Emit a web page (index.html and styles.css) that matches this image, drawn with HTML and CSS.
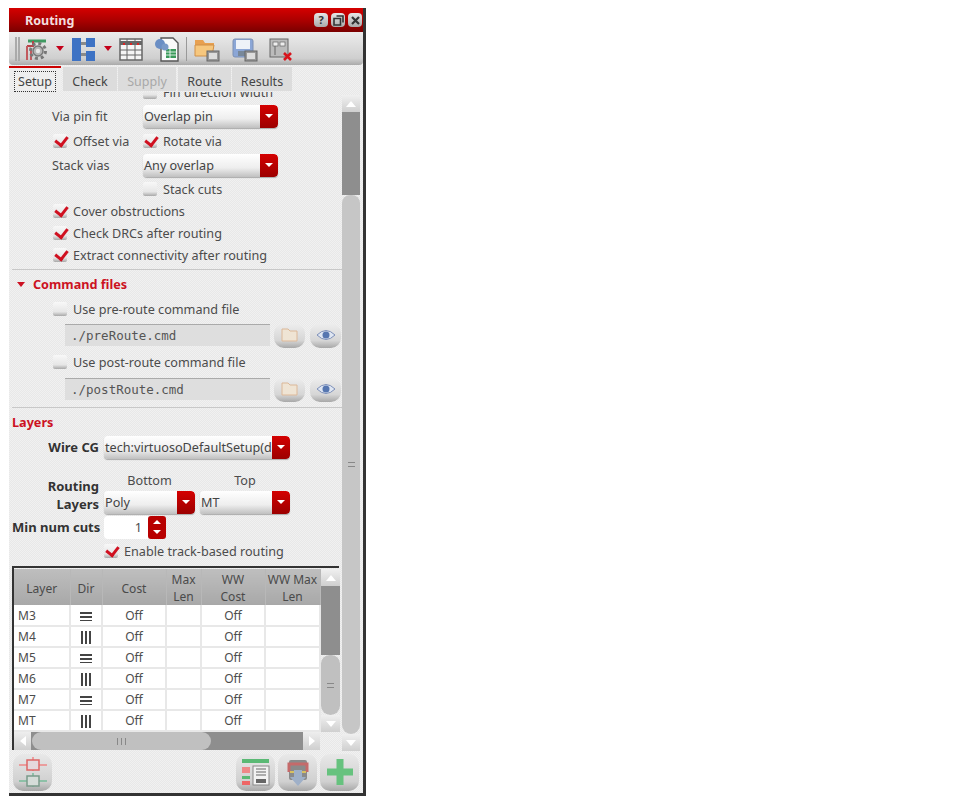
FILE: index.html
```html
<!DOCTYPE html>
<html lang="en">
<head>
  <meta charset="UTF-8" />
  <title>Routing</title>
  <link rel="stylesheet" href="styles.css">
</head>
<body>
<div class="window">
  <div class="titlebar">
    <span class="title">Routing</span>
    <div class="title-btns">
      <span class="tbtn">?</span>
      <span class="tbtn"><svg width="11" height="11" viewBox="0 0 11 11"><path d="M3.5 1h6.500v6.500M1 3.500h6.500v6.500h-6.500z" fill="none" stroke="#333" stroke-width="1.600"/></svg></span>
      <span class="tbtn"><svg width="11" height="11" viewBox="0 0 11 11"><path d="M2 2l7 7M9 2l-7 7" stroke="#333" stroke-width="2.200"/></svg></span>
    </div>
  </div>

  <div class="toolbar">
    <span class="grip"></span>
    <svg class="ti" width="24" height="24" viewBox="0 0 24 24"><path d="M5 4h18" stroke="#3f9a62" stroke-width="3"/><path d="M4 9h6V4" stroke="#b8434a" stroke-width="2" fill="none"/><path d="M4 9v14M8 12v11" stroke="#c25a5f" stroke-width="2"/><circle cx="15" cy="14" r="7.500" fill="none" stroke="#777" stroke-width="3" stroke-dasharray="3 2.900"/><circle cx="15" cy="14" r="5" fill="#b5b5b5" stroke="#777" stroke-width="1.500"/><circle cx="15" cy="14" r="2.200" fill="#e8e8e8"/></svg>
    <span class="caret"></span>
    <svg class="ti" width="24" height="24" viewBox="0 0 24 24"><rect x="1" y="1" width="9" height="23" fill="#3d72c4"/><rect x="15" y="1" width="9" height="9" fill="#3d72c4"/><rect x="15" y="14" width="9" height="10" fill="#3d72c4"/><rect x="10" y="5" width="5" height="3" fill="#8a8a8a"/><rect x="10" y="16" width="5" height="3" fill="#8a8a8a"/></svg>
    <span class="caret"></span>
    <svg class="ti" width="24" height="24" viewBox="0 0 24 24"><rect x="1" y="2" width="22" height="21" fill="#f5f5f5" stroke="#666" stroke-width="1.500"/><path d="M1 6h22" stroke="#666" stroke-width="4"/><path d="M1 13h22M1 18h22M8 2v21M16 2v21" stroke="#666"/><path d="M4 7h2M11 7h2M18 7h2" stroke="#d22" stroke-width="2"/></svg>
    <svg class="ti sheet" width="26" height="26" viewBox="0 0 26 26"><path d="M7 2h12l5 5v18H7z" fill="#fafafa" stroke="#555" stroke-width="1.400"/><rect x="12" y="13" width="10" height="9" fill="#3a9a5a"/><path d="M12 16h10M12 19h10M16 13v9" stroke="#fff" stroke-width=".8"/><circle cx="6" cy="8" r="5" fill="#6a8ec4"/><circle cx="11" cy="11" r="3.500" fill="#7a9ac8"/></svg>
    <span class="sep"></span>
    <svg class="ti" width="26" height="26" viewBox="0 0 26 26"><path d="M1 4h8l2 3h9v6H1z" fill="#e8a050"/><path d="M1 9h19l-2 11H1z" fill="#f6c77e" stroke="#d09048"/><rect x="13" y="15" width="12" height="10" fill="#999" stroke="#666"/><rect x="15" y="17" width="8" height="6" fill="#ddd"/></svg>
    <svg class="ti save" width="26" height="26" viewBox="0 0 26 26"><rect x="1" y="3" width="20" height="18" rx="2" fill="#8ba6d6" stroke="#7c90b4"/><rect x="4" y="4" width="14" height="9" fill="#eef2f8"/><rect x="6" y="15" width="9" height="5" fill="#78889a"/><rect x="13" y="15" width="12" height="10" fill="#999" stroke="#666"/><rect x="15" y="17" width="8" height="6" fill="#ddd"/></svg>
    <svg class="ti" width="24" height="26" viewBox="0 0 24 26"><rect x="1" y="3" width="18" height="18" fill="#bbb" stroke="#666"/><rect x="4" y="6" width="5" height="4" fill="#eee" stroke="#666" stroke-width=".7"/><rect x="11" y="6" width="5" height="4" fill="#eee" stroke="#666" stroke-width=".7"/><path d="M6 10v9" stroke="#666"/><path d="M15 17l7 7M22 17l-7 7" stroke="#d8141c" stroke-width="2.600"/></svg>
  </div>

  <div class="tabs">
    <span class="tab active"><span class="focus">Setup</span></span>
    <span class="tab check-tab">Check</span>
    <span class="tab supply-tab disabled">Supply</span>
    <span class="tab route-tab">Route</span>
    <span class="tab results-tab">Results</span>
  </div>

  <div class="main">
    <div class="scroller">
      <section class="via-section">
        <div class="row r-clip"><span class="spacer"></span><label class="check"><i class="box"></i>Fin direction width</label></div>
        <div class="row r-26"><span class="lbl">Via pin fit</span><span class="select s-via">Overlap pin<b class="drop"></b></span></div>
        <div class="row r-23"><label class="check c-first"><i class="box on"></i>Offset via</label><label class="check"><i class="box on"></i>Rotate via</label></div>
        <div class="row r-26"><span class="lbl">Stack vias</span><span class="select s-via">Any overlap<b class="drop"></b></span></div>
        <div class="row r-22"><span class="spacer"></span><label class="check"><i class="box"></i>Stack cuts</label></div>
        <div class="row r-22 ind"><label class="check"><i class="box on"></i>Cover obstructions</label></div>
        <div class="row r-22 ind"><label class="check"><i class="box on"></i>Check DRCs after routing</label></div>
        <div class="row r-22 ind"><label class="check"><i class="box on"></i>Extract connectivity after routing</label></div>
      </section>

      <section class="cmd-section">
        <h3 class="sec-head"><i class="tri"></i>Command files</h3>
        <div class="row r-22 ind"><label class="check"><i class="box"></i>Use pre-route command file</label></div>
        <div class="file-row">
          <span class="file">./preRoute.cmd</span>
          <span class="round"><svg width="20" height="16" viewBox="0 0 20 16"><path d="M2 2h6l2 2h7v10H2z" fill="#efe4d4" stroke="#dcb898"/></svg></span>
          <span class="round"><svg width="20" height="14" viewBox="0 0 20 14"><path d="M1 7q9-9 18 0q-9 9-18 0z" fill="#dfe6f2" stroke="#7d8fb8"/><circle cx="10" cy="7" r="3.500" fill="#5676b0"/></svg></span>
        </div>
        <div class="row r-22 ind post"><label class="check"><i class="box"></i>Use post-route command file</label></div>
        <div class="file-row">
          <span class="file">./postRoute.cmd</span>
          <span class="round"><svg width="20" height="16" viewBox="0 0 20 16"><path d="M2 2h6l2 2h7v10H2z" fill="#efe4d4" stroke="#dcb898"/></svg></span>
          <span class="round"><svg width="20" height="14" viewBox="0 0 20 14"><path d="M1 7q9-9 18 0q-9 9-18 0z" fill="#dfe6f2" stroke="#7d8fb8"/><circle cx="10" cy="7" r="3.500" fill="#5676b0"/></svg></span>
        </div>
      </section>

      <section class="layers-section">
        <h3 class="sec-head plain">Layers</h3>
        <div class="layer-form">
          <span class="blbl wire-lbl">Wire CG</span>
          <span class="select s-wire">tech:virtuosoDefaultSetup(default)<b class="drop"></b></span>
          <span class="col-head">Bottom</span>
          <span class="col-head">Top</span>
          <span class="blbl routing-lbl">Routing<br>Layers</span>
          <span class="select">Poly<b class="drop"></b></span>
          <span class="select">MT<b class="drop"></b></span>
          <span class="blbl">Min num cuts</span>
          <span class="spin"><span class="spin-val">1</span><span class="spin-btns"><i class="up"></i><i class="down"></i></span></span>
          <label class="check enable"><i class="box on"></i>Enable track-based routing</label>
        </div>
      </section>

      <div class="grid-wrap">
        <div class="grid-top">
          <table class="grid">
            <colgroup><col class="c1"><col class="c2"><col class="c3"><col class="c4"><col class="c5"><col class="c6"></colgroup>
            <thead>
              <tr><th>Layer</th><th>Dir</th><th>Cost</th><th>Max<br>Len</th><th>WW<br>Cost</th><th>WW Max<br>Len</th></tr>
            </thead>
            <tbody>
              <tr><td>M3</td><td class="mid"><i class="dir-h"></i></td><td class="mid">Off</td><td></td><td class="mid">Off</td><td></td></tr>
              <tr><td>M4</td><td class="mid"><i class="dir-v"></i></td><td class="mid">Off</td><td></td><td class="mid">Off</td><td></td></tr>
              <tr><td>M5</td><td class="mid"><i class="dir-h"></i></td><td class="mid">Off</td><td></td><td class="mid">Off</td><td></td></tr>
              <tr><td>M6</td><td class="mid"><i class="dir-v"></i></td><td class="mid">Off</td><td></td><td class="mid">Off</td><td></td></tr>
              <tr><td>M7</td><td class="mid"><i class="dir-h"></i></td><td class="mid">Off</td><td></td><td class="mid">Off</td><td></td></tr>
              <tr><td>MT</td><td class="mid"><i class="dir-v"></i></td><td class="mid">Off</td><td></td><td class="mid">Off</td><td></td></tr>
            </tbody>
          </table>
          <div class="vbar inner">
            <span class="arrow"><i class="a-up"></i></span>
            <span class="track t-inner"></span>
            <span class="thumb th-inner"><i class="handle"></i></span>
            <span class="arrow"><i class="a-down"></i></span>
          </div>
        </div>
        <div class="hbar">
          <span class="arrow-h"><i class="a-left"></i></span>
          <span class="hthumb"><i class="vhandle"></i></span>
          <span class="htrack"></span>
          <span class="arrow-h"><i class="a-right"></i></span>
        </div>
      </div>
    </div>

    <div class="vbar outer">
      <span class="arrow"><i class="a-up"></i></span>
      <span class="track t-outer"></span>
      <span class="thumb th-outer"><i class="handle"></i></span>
      <span class="arrow"><i class="a-down"></i></span>
    </div>
  </div>

  <div class="footer">
    <span class="fbtn"><svg width="30" height="32" viewBox="0 0 30 32"><path d="M1 9h28M15 1v14" stroke="#e88" stroke-width="1.500"/><rect x="9" y="4" width="12" height="10" fill="#e5d8dc" stroke="#d66" stroke-width="1.500"/><path d="M1 25h28M15 17v14" stroke="#7b9" stroke-width="1.500"/><rect x="9" y="20" width="12" height="10" fill="#d5dcd8" stroke="#7a9a8a" stroke-width="1.500"/></svg></span>
    <span class="fbtn push"><svg width="30" height="30" viewBox="0 0 30 30"><rect x="1" y="2" width="27" height="4" fill="#5ab974"/><rect x="1" y="10" width="8" height="6" fill="#e88"/><rect x="1" y="19" width="8" height="3" fill="#5ab974"/><rect x="1" y="24" width="8" height="4" fill="#e66"/><rect x="12" y="9" width="16" height="19" fill="#f2f2f2" stroke="#888"/><path d="M15 12h10M15 15h10M15 18h10" stroke="#666"/><rect x="15" y="22" width="10" height="4" fill="#666"/></svg></span>
    <span class="fbtn"><svg width="28" height="30" viewBox="0 0 28 30"><rect x="5" y="3" width="18" height="20" rx="2" fill="#8a8a8a"/><path d="M5 15V7h18v8" fill="none" stroke="#c56a6a" stroke-width="3"/><path d="M6 15h5M22 15h-5" stroke="#d8c060" stroke-width="2"/><path d="M10 13h8v7h4l-8 9l-8-9h4z" fill="#9fb0c8"/></svg></span>
    <span class="fbtn"><svg width="30" height="30" viewBox="0 0 30 30"><path d="M15 2v26M2 15h26" stroke="#66c27e" stroke-width="7"/></svg></span>
  </div>
</div>
</body>
</html>
```

FILE: styles.css
```css
* {
  box-sizing: border-box;
}
html, body {
  height: 100%;
}
body {
  margin: 0;
  background-color: #fff;
  font-family: "Noto Sans", "Open Sans", sans-serif;
  font-size: 12.65px;
  color: #4c4c4c;
  overflow: hidden;
}
.window {
  width: 357px;
  height: 788px;
  margin: 8px 0 0 9px;
  /* the capture is dithered, this gives the same speckled grey */
  background: repeating-conic-gradient(#f1f1f1 0 25%, #e8e8e8 0 50%) 0 0 / 2px 2px;
  border-right: 3px solid #333;
  border-bottom: 3px solid #333;
  display: flex;
  flex-direction: column;
}

/* title bar */
.titlebar {
  height: 24px;
  flex: none;
  background: linear-gradient(#d50000, #a80000 55%, #7a0000);
  display: flex;
  align-items: center;
  justify-content: space-between;
  padding: 0 1px 0 16px;
}
.title {
  color: #f3dede;
  font-weight: 700;
  font-size: 12.5px;
}
.title-btns {
  display: flex;
  gap: 3px;
}
.tbtn {
  width: 14px;
  height: 14px;
  border-radius: 4px;
  background: linear-gradient(#e6e6e6, #aaa);
  color: #333;
  font-weight: 700;
  font-size: 11px;
  line-height: 14px;
  display: flex;
  align-items: center;
  justify-content: center;
}

/* toolbar */
.toolbar {
  height: 33px;
  flex: none;
  background: linear-gradient(#ececec, #cfcfcf 80%, #aaa);
  border-radius: 0 0 4px 4px;
  display: flex;
  align-items: center;
  padding-left: 6px;
}
.grip {
  width: 5px;
  height: 24px;
  border-left: 2px solid #aaa;
  border-right: 2px solid #aaa;
  margin-right: 3px;
}
.ti {
  flex: none;
}
.ti.sheet {
  margin-left: 11px;
}
.ti.save {
  margin: 0 11px 0 12px;
}
.caret {
  width: 0;
  height: 0;
  margin: 0 7px 0 9px;
  border-left: 4px solid transparent;
  border-right: 4px solid transparent;
  border-top: 5px solid #c4001a;
}
.sep {
  width: 1px;
  height: 24px;
  background-color: #999;
  margin: 0 7px 0 6px;
}

/* tabs */
.tabs {
  height: 26px;
  flex: none;
  display: flex;
  gap: 1px;
  margin-top: 1px;
}
.tab {
  background-color: #dcdcdc;
  border-top: 1px solid #eee;
  height: 25px;
  display: flex;
  align-items: center;
  justify-content: center;
  width: 54px;
  font-size: 12.5px;
  color: #444;
  padding-top: 5px;
}
.tab.active {
  width: 52px;
  background-color: #eee;
  border-top: 2px solid #cc0000;
  margin-right: 1px;
  padding-top: 3px;
}
.focus {
  border: 1px dotted #333;
  padding: 0 3px;
  line-height: 19px;
}
.supply-tab {
  width: 58px;
}
.route-tab {
  width: 53px;
  margin-left: 1px;
}
.results-tab {
  width: 60px;
}
.disabled {
  color: #a8a8a8;
}

/* main scroll area */
.main {
  flex: 1;
  display: flex;
  min-height: 0;
}
.scroller {
  width: 333px;
  overflow: hidden;
  padding-left: 3px;
  flex: none;
}
section {
  border-bottom: 1px solid #c8c8c8;
}
.via-section {
  padding-bottom: 3px;
}
.cmd-section {
  padding-bottom: 5px;
}
.layers-section {
  border-bottom: 0;
  padding-top: 4px;
}
.row {
  display: flex;
  align-items: center;
  padding-left: 40px;
}
.row.ind {
  padding-left: 41px;
}
.r-clip {
  height: 22px;
  margin-top: -11px;
}
.r-22 {
  height: 22px;
}
.r-23 {
  height: 23px;
}
.r-26 {
  height: 26px;
}
.spacer,
.lbl {
  width: 91px;
  flex: none;
}
.c-first {
  width: 90px;
  margin-left: 1px;
}
.check {
  display: flex;
  align-items: center;
  white-space: nowrap;
  gap: 6px;
}
.box {
  width: 14px;
  height: 14px;
  flex: none;
  border-radius: 2px;
  background: linear-gradient(#f8f8f8, #e6e6e6 70%, #a8a8a8);
  position: relative;
}
.box.on::after {
  content: "";
  position: absolute;
  left: 4px;
  top: 0;
  width: 6px;
  height: 9px;
  border-right: 3px solid #d01020;
  border-bottom: 3px solid #d01020;
  transform: rotate(38deg);
}
.select {
  height: 23px;
  border-radius: 4px;
  background: linear-gradient(#fff, #eee 60%, #c0c0c0);
  box-shadow: 0 1px 1px #aaa;
  display: flex;
  align-items: center;
  justify-content: space-between;
  padding-left: 1px;
  overflow: hidden;
  white-space: nowrap;
  color: #444;
  position: relative;
}
.s-via {
  width: 135px;
}
.drop {
  width: 18px;
  height: 23px;
  flex: none;
  background: linear-gradient(#d40000, #9c0000);
  border-radius: 0 4px 4px 0;
  position: absolute;
  right: 0;
  top: 0;
}
.drop::after {
  content: "";
  position: absolute;
  left: 5px;
  top: 9px;
  border-left: 4px solid transparent;
  border-right: 4px solid transparent;
  border-top: 4px solid #fff;
}
.sec-head {
  margin: 0;
  color: #cc1122;
  font-size: 12.65px;
  font-weight: 700;
  height: 28px;
  display: flex;
  align-items: center;
  padding-left: 5px;
}
.sec-head.plain {
  padding-left: 0;
  height: 20px;
}
.tri {
  width: 0;
  height: 0;
  margin-right: 8px;
  border-left: 4px solid transparent;
  border-right: 4px solid transparent;
  border-top: 5px solid #cc1122;
}
.file-row {
  display: flex;
  align-items: center;
  height: 26px;
  margin-top: 2px;
  padding-left: 53px;
}
.post {
  margin-top: 3px;
}
.post + .file-row {
  margin-top: 3px;
}
.file {
  width: 205px;
  height: 22px;
  flex: none;
  background-color: #dedede;
  border-top: 1px solid #aaa;
  font-family: "DejaVu Sans Mono", monospace;
  font-size: 12.5px;
  line-height: 21px;
  padding-left: 6px;
  margin-right: 4px;
  color: #555;
}
.round {
  width: 31px;
  height: 25px;
  flex: none;
  margin-right: 5px;
  border-radius: 10px;
  background: linear-gradient(#eee, #d6d6d6 70%, #a8a8a8);
  display: flex;
  align-items: center;
  justify-content: center;
}
.round:last-child {
  margin-right: 0;
}

/* layers form */
.layer-form {
  display: grid;
  grid-template-columns: 87px 91px 90px;
  column-gap: 5px;
  grid-template-rows: 24px 31px 24px 26px 22px;
  padding-top: 3px;
  align-items: center;
}
.blbl {
  font-weight: 700;
  font-size: 13px;
  color: #333;
  text-align: right;
  white-space: nowrap;
}
.wire-lbl {
  grid-column: 1;
}
.s-wire {
  grid-column: 2 / 4;
}
.col-head {
  text-align: center;
  align-self: end;
  padding-bottom: 1px;
}
.col-head:first-of-type {
  grid-column: 2;
}
.layer-form .col-head {
  grid-row: 2;
}
.layer-form .col-head + .col-head {
  grid-column: 3;
}
.routing-lbl {
  grid-column: 1;
  grid-row: 2 / 4;
  align-self: end;
  line-height: 18px;
  padding-bottom: 1px;
}
.spin {
  display: flex;
  width: 62px;
  height: 23px;
  grid-column: 2;
}
.spin-val {
  flex: 1;
  background-color: #fff;
  border-radius: 4px 0 0 4px;
  text-align: right;
  padding-right: 6px;
  line-height: 23px;
}
.spin-btns {
  width: 18px;
  background: #b80000;
  border-radius: 3px;
  display: flex;
  flex-direction: column;
  align-items: center;
  justify-content: space-around;
  padding: 2px 0;
}
.spin-btns .up {
  border-left: 4px solid transparent;
  border-right: 4px solid transparent;
  border-bottom: 4px solid #fff;
}
.spin-btns .down {
  border-left: 4px solid transparent;
  border-right: 4px solid transparent;
  border-top: 4px solid #fff;
}
.enable {
  grid-column: 2 / 4;
  white-space: nowrap;
}

/* table */
.grid-wrap {
  margin-top: 4px;
  width: 327px;
  border-top: 2px solid #333;
  border-left: 2px solid #333;
  padding-top: 1px;
}
.grid-top {
  display: flex;
}
.grid {
  width: 306px;
  flex: none;
  table-layout: fixed;
  border-collapse: collapse;
  background-color: #fff;
}
.c1 { width: 56px; }
.c2 { width: 32px; }
.c3 { width: 64px; }
.c4 { width: 35px; }
.c5 { width: 64px; }
.c6 { width: 55px; }
.grid th {
  height: 36px;
  font-weight: 400;
  font-size: 12px;
  line-height: 17px;
  color: #4a4a4a;
  background: linear-gradient(#bebebe, #a8a8a8);
  border-right: 1px solid #b8b8b8;
  padding: 2px 0 0;
  white-space: nowrap;
  overflow: hidden;
}
.grid td {
  height: 21px;
  padding: 0 0 0 4px;
  font-size: 12px;
  border-right: 2px solid #e8e8e8;
  border-bottom: 2px solid #e8e8e8;
}
.grid td.mid {
  text-align: center;
  padding: 0;
}
.dir-h,
.dir-v {
  display: inline-block;
  vertical-align: middle;
}
.dir-h {
  width: 12px;
  height: 9px;
  background: repeating-linear-gradient(#444 0 2px, #fff 2px 4px);
}
.dir-v {
  width: 10px;
  height: 13px;
  background: repeating-linear-gradient(90deg, #444 0 2px, #fff 2px 4px);
}
.vbar {
  display: flex;
  flex-direction: column;
  flex: none;
  width: 19px;
}
.arrow {
  height: 17px;
  flex: none;
  background: linear-gradient(#f0f0f0, #cfcfcf);
  display: flex;
  align-items: center;
  justify-content: center;
}
.a-up {
  border-left: 5px solid transparent;
  border-right: 5px solid transparent;
  border-bottom: 6px solid #fff;
}
.a-down {
  border-left: 5px solid transparent;
  border-right: 5px solid transparent;
  border-top: 6px solid #fff;
}
.track {
  background-color: #8e8e8e;
}
.t-inner {
  height: 69px;
}
.t-outer {
  height: 83px;
}
.thumb {
  background-color: #c6c6c6;
  border-radius: 9px 9px 10px 10px;
  display: flex;
  align-items: center;
  justify-content: center;
  flex: 1;
}
.th-inner {
  background-color: #c0c0c0;
}
.handle {
  width: 7px;
  height: 5px;
  border-top: 1px solid #888;
  border-bottom: 1px solid #888;
}
.outer {
  width: 18px;
  margin-top: 3px;
}
.hbar {
  display: flex;
  height: 18px;
  width: 306px;
  background-color: #8e8e8e;
}
.arrow-h {
  width: 17px;
  flex: none;
  background: linear-gradient(#eee, #cfcfcf);
  display: flex;
  align-items: center;
  justify-content: center;
}
.a-left {
  border-top: 5px solid transparent;
  border-bottom: 5px solid transparent;
  border-right: 6px solid #fff;
}
.a-right {
  border-top: 5px solid transparent;
  border-bottom: 5px solid transparent;
  border-left: 6px solid #fff;
}
.hthumb {
  width: 179px;
  margin-left: 1px;
  background-color: #c0c0c0;
  border-radius: 9px;
  display: flex;
  align-items: center;
  justify-content: center;
}
.vhandle {
  width: 9px;
  height: 7px;
  border-left: 1px solid #888;
  border-right: 1px solid #888;
  background: linear-gradient(90deg, transparent 3px, #888 3px 4px, transparent 4px);
}
.htrack {
  flex: 1;
}

/* bottom buttons */
.footer {
  height: 42px;
  flex: none;
  display: flex;
  align-items: center;
  gap: 3px;
  padding: 0 4px;
}
.fbtn {
  width: 39px;
  height: 37px;
  flex: none;
  border-radius: 10px;
  background: linear-gradient(#e8e8e8, #d0d0d0 75%, #a8a8a8);
  display: flex;
  align-items: center;
  justify-content: center;
}
.fbtn.push {
  margin-left: auto;
}
```
